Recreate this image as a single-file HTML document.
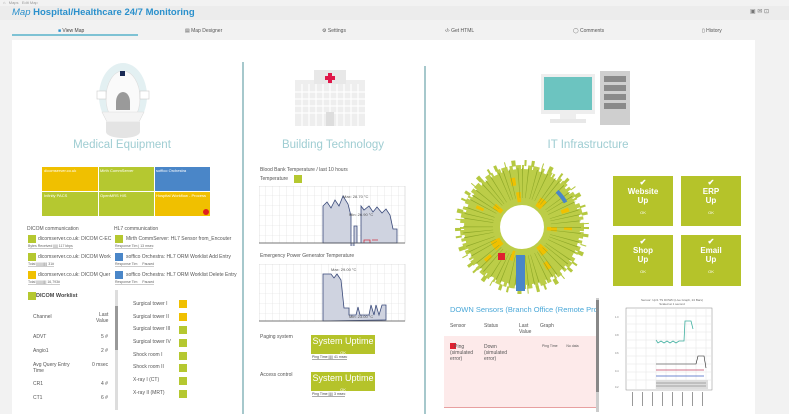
<!DOCTYPE html>
<html><head><meta charset="utf-8"><style>
*{margin:0;padding:0;box-sizing:border-box}
body{width:789px;height:414px;overflow:hidden;background:#f2f2f2;font-family:"Liberation Sans",sans-serif;position:relative;color:#555}
.a{position:absolute;white-space:nowrap}
.s{font-size:5px;color:#555}
.cb{position:absolute;width:8px;height:8px;background:#b5c830}
.cy{position:absolute;width:8px;height:8px;background:#f0c000}
.cbl{position:absolute;width:8px;height:8px;background:#4a86c8}
.ttl{font-size:11.5px;color:#9fcdd2;position:absolute;white-space:nowrap;transform:translateX(-50%)}
.box{position:absolute;background:#b5c32a;color:#fff;text-align:center;font-size:8px;font-weight:bold;line-height:9px}
.up{position:absolute;background:#b5c32a;color:#fff;text-align:center;font-size:9px;line-height:10px}
</style></head><body>
<div class="a s" style="left:3px;top:0;font-size:4px;color:#999">⌂ &nbsp; Maps &nbsp; Edit Map</div>
<div class="a" style="left:0;top:6px;width:789px;height:14px;background:#ececec"></div>
<div class="a" style="left:12px;top:7px;font-size:9.5px;color:#2a90cc;font-weight:bold"><i style="font-weight:normal">Map</i> Hospital/Healthcare 24/7 Monitoring</div>
<div class="a" style="left:750px;top:8px;font-size:6px;color:#777">▣ ✉ ⊡</div>
<div class="a s" style="left:58px;top:28px;color:#444"><span style="color:#2a90cc">■</span> View Map</div>
<div class="a" style="left:12px;top:34px;width:126px;height:2px;background:#7ec2d4"></div>
<div class="a s" style="left:185px;top:28px">▤ Map Designer</div>
<div class="a s" style="left:322px;top:28px">⚙ Settings</div>
<div class="a s" style="left:445px;top:28px">‹/› Get HTML</div>
<div class="a s" style="left:573px;top:28px">◯ Comments</div>
<div class="a s" style="left:702px;top:28px">▯ History</div>
<div class="a" style="left:12px;top:40px;width:743px;height:374px;background:#fff"></div>
<div class="a" style="left:242px;top:62px;width:1.5px;height:352px;background:#a6c8cc"></div>
<div class="a" style="left:424px;top:66px;width:1.5px;height:348px;background:#a6c8cc"></div>
<!-- MRI icon -->
<svg class="a" style="left:80px;top:58px" width="90" height="82">
<ellipse cx="43" cy="38" rx="24" ry="33" fill="#e3f0f2"/>
<ellipse cx="43" cy="40" rx="17" ry="27" fill="#fafafa" stroke="#ddd" stroke-width=".6"/>
<rect x="40" y="13" width="5" height="5" fill="#1a2a55"/>
<path d="M36 44 a7 10 0 0 1 14 0 v8 h-14z" fill="#9a9a9a"/>
<rect x="17" y="33" width="9" height="8" fill="#fff" stroke="#ccc" stroke-width=".6"/><rect x="60" y="33" width="9" height="8" fill="#fff" stroke="#ccc" stroke-width=".6"/>
<path d="M22 54 h42 l-5 10 h-32z" fill="#f4f4f4" stroke="#ddd" stroke-width=".6"/>
<path d="M26 64 h34 v10 a17 6 0 0 1 -34 0z" fill="#e4e4e4"/>
</svg>
<div class="ttl" style="left:122px;top:139px">Medical Equipment</div>
<!-- Building -->
<svg class="a" style="left:290px;top:68px" width="80" height="60">
<rect x="5" y="12" width="70" height="46" fill="#eee"/>
<rect x="24" y="2" width="32" height="14" fill="#e8e8e8"/>
<path d="M38 5h4v3h3v4h-3v3h-4v-3h-3v-4h3z" fill="#e0184a"/>
<g stroke="#fff" stroke-width="1.2"><path d="M5 24h70M5 31h70M5 38h70M5 45h70M12 16v42M19 16v42M26 16v42M33 16v42M47 16v42M54 16v42M61 16v42M68 16v42M40 16v36"/></g>
<rect x="36" y="44" width="8" height="14" fill="#ddd"/>
</svg>
<div class="ttl" style="left:333px;top:139px">Building Technology</div>
<!-- IT -->
<svg class="a" style="left:538px;top:68px" width="96" height="60">
<rect x="3" y="6" width="54" height="40" fill="#eee"/><rect x="6" y="9" width="48" height="33" fill="#6cc4c0"/>
<rect x="22" y="46" width="16" height="6" fill="#eee"/><rect x="12" y="51" width="36" height="4" fill="#e8e8e8"/>
<rect x="62" y="3" width="30" height="54" fill="#cfcfcf"/>
<g fill="#8a8a8a"><rect x="66" y="8" width="22" height="6"/><rect x="66" y="17" width="22" height="6"/><rect x="66" y="26" width="22" height="6"/><rect x="66" y="35" width="22" height="6"/></g>
</svg>
<div class="ttl" style="left:588px;top:139px">IT Infrastructure</div>
<!-- treemap -->
<div class="a" style="left:42px;top:167px;width:56px;height:24px;background:#f0c000"></div>
<div class="a" style="left:98px;top:167px;width:56px;height:24px;background:#b5c830;border-left:1px solid #fff"></div>
<div class="a" style="left:154px;top:167px;width:56px;height:24px;background:#4a86c8;border-left:1px solid #fff"></div>
<div class="a" style="left:42px;top:192px;width:56px;height:24px;background:#b5c830"></div>
<div class="a" style="left:98px;top:192px;width:56px;height:24px;background:#b5c830;border-left:1px solid #fff"></div>
<div class="a" style="left:154px;top:192px;width:56px;height:24px;background:#f0c000;border-left:1px solid #fff"></div>
<div class="a" style="left:203px;top:209px;width:6px;height:6px;border-radius:50%;background:#e02020"></div>
<div class="a" style="left:44px;top:168px;font-size:4px;color:#fff">dicomserver.co.uk</div>
<div class="a" style="left:100px;top:168px;font-size:4px;color:#fff">Mirth CommServer</div>
<div class="a" style="left:156px;top:168px;font-size:4px;color:#fff">soffico Orchestra</div>
<div class="a" style="left:44px;top:193px;font-size:4px;color:#fff">Infinity PACS</div>
<div class="a" style="left:100px;top:193px;font-size:4px;color:#fff">OpenMRS HIS</div>
<div class="a" style="left:156px;top:193px;font-size:4px;color:#fff">Hospital Workflow - Process</div>
<div class="a s" style="left:27px;top:226px">DICOM communication</div>
<div class="a s" style="left:114px;top:226px">HL7 communication</div>
<div class="cb" style="left:28px;top:235px"></div><div class="a s" style="left:38px;top:236px">dicomserver.co.uk: DICOM C-EC</div>
<div class="cb" style="left:28px;top:253px"></div><div class="a s" style="left:38px;top:254px">dicomserver.co.uk: DICOM Work</div>
<div class="cy" style="left:28px;top:271px"></div><div class="a s" style="left:38px;top:272px">dicomserver.co.uk: DICOM Quer</div>
<div class="cb" style="left:115px;top:235px"></div><div class="a s" style="left:126px;top:236px">Mirth CommServer: HL7 Sensor from_Encouter</div>
<div class="cbl" style="left:115px;top:253px"></div><div class="a s" style="left:126px;top:254px">soffico Orchestra: HL7 ORM Worklist Add Entry</div>
<div class="cbl" style="left:115px;top:271px"></div><div class="a s" style="left:126px;top:272px">soffico Orchestra: HL7 ORM Worklist Delete Entry</div>
<div class="a" style="left:28px;top:244px;font-size:3.5px;color:#666;border-bottom:1px solid #ccc">Bytes Received ||||| 117 kbps</div>
<div class="a" style="left:28px;top:262px;font-size:3.5px;color:#666;border-bottom:1px solid #ccc">Total |||||||||||| 31#</div>
<div class="a" style="left:28px;top:280px;font-size:3.5px;color:#666;border-bottom:1px solid #ccc">Total ||||||||||| 16,793#</div>
<div class="a" style="left:115px;top:244px;font-size:3.5px;color:#666;border-bottom:1px solid #ccc">Response Tim | 13 msec</div>
<div class="a" style="left:115px;top:262px;font-size:3.5px;color:#666;border-bottom:1px solid #ccc">Response Tim &nbsp; &nbsp; Paused</div>
<div class="a" style="left:115px;top:280px;font-size:3.5px;color:#666;border-bottom:1px solid #ccc">Response Tim &nbsp; &nbsp; Paused</div>
<div class="cb" style="left:28px;top:292px"></div><div class="a" style="left:36px;top:293px;font-size:5.5px;font-weight:bold;color:#444">DICOM Worklist</div>
<div class="a s" style="left:33px;top:314px">Channel</div><div class="a s" style="left:96px;top:312px;text-align:right">Last<br>Value</div>
<div class="a s" style="left:33px;top:334px">ADVT</div><div class="a s" style="left:101px;top:334px">5 #</div>
<div class="a s" style="left:33px;top:348px">Angio1</div><div class="a s" style="left:101px;top:348px">2 #</div>
<div class="a s" style="left:33px;top:362px">Avg Query Entry<br>Time</div><div class="a s" style="left:92px;top:362px">0 msec</div>
<div class="a s" style="left:33px;top:381px">CR1</div><div class="a s" style="left:101px;top:381px">4 #</div>
<div class="a s" style="left:33px;top:395px">CT1</div><div class="a s" style="left:101px;top:395px">6 #</div>
<div class="a" style="left:115px;top:290px;width:3px;height:120px;background:#ddd"></div>
<div class="a" style="left:115px;top:306px;width:3px;height:44px;background:#999"></div>
<div class="a s" style="left:133px;top:301px">Surgical tower I</div><div class="cy" style="left:179px;top:300px"></div>
<div class="a s" style="left:133px;top:314px">Surgical tower II</div><div class="cy" style="left:179px;top:313px"></div>
<div class="a s" style="left:133px;top:326px">Surgical tower III</div><div class="cb" style="left:179px;top:326px"></div>
<div class="a s" style="left:133px;top:339px">Surgical tower IV</div><div class="cb" style="left:179px;top:339px"></div>
<div class="a s" style="left:133px;top:352px">Shock room I</div><div class="cb" style="left:179px;top:352px"></div>
<div class="a s" style="left:133px;top:364px">Shock room II</div><div class="cb" style="left:179px;top:364px"></div>
<div class="a s" style="left:133px;top:377px">X-ray I (CT)</div><div class="cb" style="left:179px;top:377px"></div>
<div class="a s" style="left:133px;top:390px">X-ray II (MRT)</div><div class="cb" style="left:179px;top:390px"></div>
<!-- middle charts -->
<div class="a s" style="left:260px;top:167px">Blood Bank Temperature / last 10 hours</div>
<div class="a s" style="left:260px;top:176px">Temperature</div><div class="cb" style="left:294px;top:175px"></div>
<svg class="a" style="left:259px;top:186px" width="148" height="60">
<defs><pattern id="g" width="7" height="10" patternUnits="userSpaceOnUse"><path d="M7 0V10M0 10H7" stroke="#ddd" stroke-width=".6" fill="none"/></pattern></defs>
<rect x="0" y="0" width="146" height="57" fill="url(#g)" stroke="#ccc" stroke-width=".6"/>
<path d="M64 57V20l4-4 4 6 4-8 4 6 4-10 5 8 3 12v45h3V40h3v17h4V20l3 4 5-4 4 6 4-5 5 6 4-4 4 6 3 14h4v14z" fill="#cfd3e0" stroke="#3a4a7a" stroke-width=".8"/>
<text x="84" y="12" font-size="4" fill="#555">Max: 28.70 °C</text><text x="90" y="30" font-size="4" fill="#555">Min: 26.90 °C</text>
<path d="M105 57v-3h6v3M113 54h6" stroke="#d03040" stroke-width=".8" fill="none"/>
<path d="M0 57H146" stroke="#555" stroke-width=".8"/>
</svg>
<div class="a s" style="left:260px;top:253px">Emergency Power Generator Temperature</div>
<svg class="a" style="left:259px;top:264px" width="148" height="60">
<rect x="0" y="0" width="146" height="57" fill="url(#g)" stroke="#ccc" stroke-width=".6"/>
<path d="M64 57V10h8l3 4 3-4 4 6 3 28h5v7h7l2-8 2 8 4 0 5 0 2-10 3 10 2-10 3 10 3-10h4v15z" fill="#cfd3e0" stroke="#3a4a7a" stroke-width=".8"/>
<text x="72" y="7" font-size="4" fill="#555">Max: 29.00 °C</text><text x="90" y="54" font-size="4" fill="#555">Min: 23.00 °C</text>
<path d="M0 57H146" stroke="#555" stroke-width=".8"/>
</svg>
<div class="a s" style="left:260px;top:334px">Paging system</div>
<div class="up" style="left:311px;top:335px;width:64px;height:19px;padding-top:1px">System Uptime<br><span style="font-size:4px">OK</span></div>
<div class="a" style="left:312px;top:355px;font-size:3.5px;color:#444;border-bottom:1px solid #aaa">Ping Time ||||| 41 msec</div>
<div class="a s" style="left:260px;top:372px">Access control</div>
<div class="up" style="left:311px;top:372px;width:64px;height:19px;padding-top:1px">System Uptime<br><span style="font-size:4px">OK</span></div>
<div class="a" style="left:312px;top:392px;font-size:3.5px;color:#444;border-bottom:1px solid #aaa">Ping Time ||||| 3 msec</div>
<!-- sunburst -->
<svg class="a" style="left:452px;top:157px" width="140" height="140">
<circle cx="70" cy="70" r="40" fill="none" stroke="#bccd48" stroke-width="36"/>
<circle cx="70" cy="70" r="58" fill="none" stroke="#bccd48" stroke-width="8" stroke-dasharray="4 1 6 2 3 3 5 1 2 4"/>
<circle cx="70" cy="70" r="64" fill="none" stroke="#b5c840" stroke-width="6" stroke-dasharray="2 5 3 8 1 6 4 9"/>
<circle cx="70" cy="70" r="30" fill="none" stroke="#f0c000" stroke-width="10" stroke-dasharray="4 18 7 26 3 14 9 30 5 20"/>
<circle cx="70" cy="70" r="46" fill="none" stroke="#f0c000" stroke-width="8" stroke-dasharray="3 40 5 60 4 50"/>
<circle cx="70" cy="70" r="44" fill="none" stroke="#8ea828" stroke-width="30" stroke-dasharray=".6 4 .6 6 .6 3"/>
<circle cx="70" cy="70" r="50" fill="none" stroke="#4a86c8" stroke-width="4" stroke-dasharray="14 300" stroke-dashoffset="40"/>
<rect x="64" y="98" width="9" height="36" fill="#4a86c8"/>
<rect x="46" y="96" width="7" height="7" fill="#e02030"/>
<circle cx="70" cy="70" r="21" fill="#fff"/>
</svg>
<div class="box" style="left:613px;top:176px;width:60px;height:50px;padding-top:2px">✔<br>Website<br>Up<br><span style="font-size:4px;font-weight:normal;line-height:16px">OK</span></div>
<div class="box" style="left:681px;top:176px;width:60px;height:50px;padding-top:2px">✔<br>ERP<br>Up<br><span style="font-size:4px;font-weight:normal;line-height:16px">OK</span></div>
<div class="box" style="left:613px;top:235px;width:60px;height:51px;padding-top:2px">✔<br>Shop<br>Up<br><span style="font-size:4px;font-weight:normal;line-height:16px">OK</span></div>
<div class="box" style="left:681px;top:235px;width:60px;height:51px;padding-top:2px">✔<br>Email<br>Up<br><span style="font-size:4px;font-weight:normal;line-height:16px">OK</span></div>
<!-- down sensors -->
<div class="a" style="left:444px;top:298px;width:152px;height:112px;overflow:hidden">
<div class="a" style="left:6px;top:7px;font-size:7.5px;color:#4aa8d8">DOWN Sensors (Branch Office (Remote Pro</div>
<div class="a s" style="left:6px;top:25px">Sensor</div><div class="a s" style="left:40px;top:25px">Status</div><div class="a s" style="left:75px;top:25px">Last<br>Value</div><div class="a s" style="left:96px;top:25px">Graph</div>
<div class="a" style="left:0;top:38px;width:152px;height:72px;background:#fdeaea;border-bottom:1px solid #e8a0a0"></div>
<div class="a" style="left:6px;top:45px;width:6px;height:6px;background:#e02030"></div>
<div class="a s" style="left:6px;top:46px">&nbsp;&nbsp;&nbsp;Ping<br>(simulated<br>error)</div>
<div class="a s" style="left:40px;top:46px">Down<br>(simulated<br>error)</div>
<div class="a" style="left:98px;top:46px;font-size:3.5px;color:#555">Ping Time &nbsp; &nbsp; &nbsp; &nbsp; No data</div>
</div>
<div class="a" style="left:596px;top:298px;width:3px;height:114px;background:#ccc"></div>
<div class="a" style="left:596px;top:300px;width:3px;height:92px;background:#888"></div>
<!-- line chart -->
<svg class="a" style="left:612px;top:296px" width="120" height="118">
<text x="60" y="5" font-size="3" fill="#666" text-anchor="middle">Sensor: Up/1 TS DOWN (Live Graph, 24 Bars)</text>
<text x="60" y="9" font-size="3" fill="#666" text-anchor="middle">Scaled at 1 second</text>
<rect x="14" y="12" width="86" height="82" fill="#fff" stroke="#888" stroke-width=".5"/>
<g stroke="#e4e4e4" stroke-width=".5"><path d="M14 20H100M14 28H100M14 36H100M14 44H100M14 52H100M14 60H100M14 68H100M14 76H100M14 84H100M24 12V94M34 12V94M44 12V94M54 12V94M64 12V94M74 12V94M84 12V94M94 12V94"/></g>
<path d="M44 44l2 3 3-2 3 2 3-2 3 2 3-2 3 2 3-2 5 0 1-20 6 0 2 8" stroke="#40b0a0" fill="none" stroke-width=".8"/>
<path d="M44 68h40l2-8h6l2 12" stroke="#222" fill="none" stroke-width=".6"/>
<path d="M44 74h48" stroke="#c04060" fill="none" stroke-width=".8"/>
<path d="M44 80h48" stroke="#4060c0" fill="none" stroke-width=".8"/>
<rect x="44" y="84" width="52" height="9" fill="#ddd"/>
<path d="M44 87h50M44 90h50" stroke="#666" stroke-width=".5"/>
<g font-size="2.5" fill="#777"><text x="3" y="22">1.0</text><text x="3" y="40">0.8</text><text x="3" y="58">0.6</text><text x="3" y="76">0.4</text><text x="3" y="92">0.2</text></g>
<g fill="#999"><rect x="20" y="96" width="1" height="14"/><rect x="30" y="96" width="1" height="14"/><rect x="40" y="96" width="1" height="14"/><rect x="50" y="96" width="1" height="14"/><rect x="60" y="96" width="1" height="14"/><rect x="70" y="96" width="1" height="14"/><rect x="80" y="96" width="1" height="14"/><rect x="90" y="96" width="1" height="14"/></g>
</svg>
</body></html>
